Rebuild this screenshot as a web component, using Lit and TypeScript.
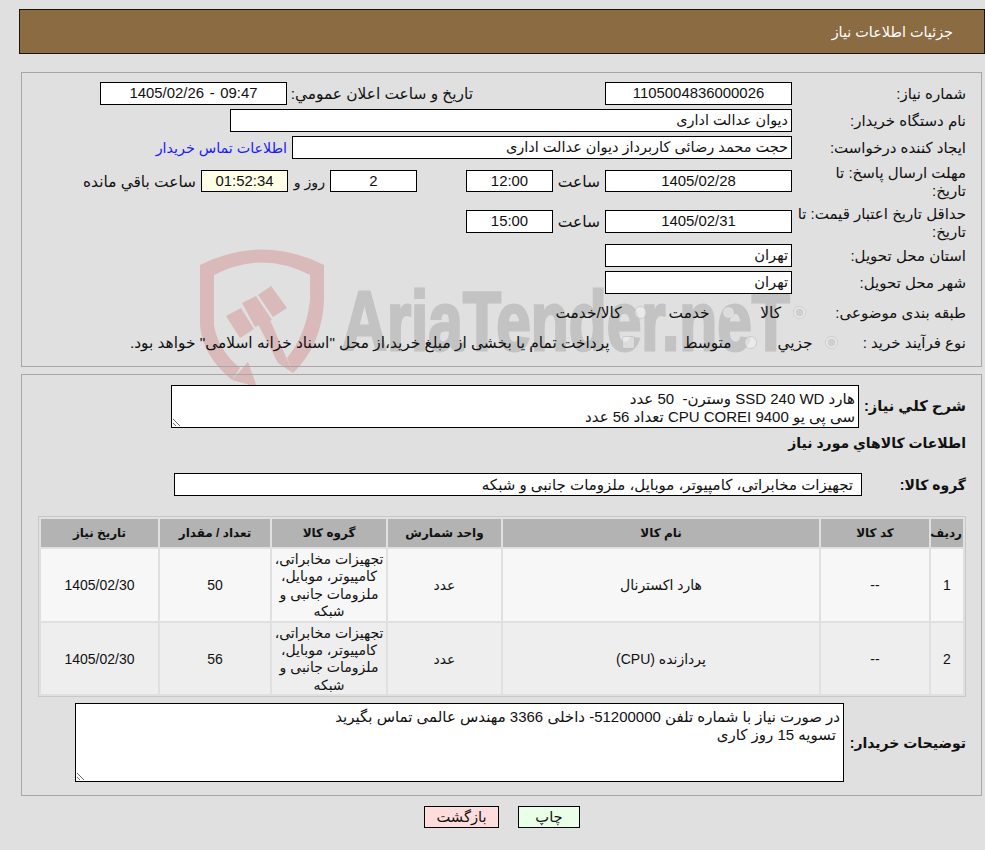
import { LitElement, html, css, svg } from "lit";
import { customElement } from "lit/decorators.js";

const GROUP = html`تجهیزات مخابراتی،<br />کامپیوتر، موبایل،<br />ملزومات جانبی و<br />شبکه`;

@customElement("app-root")
export class AppRoot extends LitElement {
  static styles = css`
    :host {
      display: block;
      position: relative;
      width: 985px;
      height: 850px;
      overflow: hidden;
      background: #e0e0e0;
      font-family: "Liberation Sans", "DejaVu Sans", sans-serif;
      font-size: 14.67px;
      line-height: 18px;
      color: #111;
      direction: rtl;
    }
    .wm { position: absolute; left: 0; top: 0; z-index: 0; direction: ltr; }
    .wm text { font-family: "Liberation Sans", sans-serif; font-weight: 700; }
    .page {
      position: relative;
      z-index: 1;
      display: flex;
      flex-direction: column;
      padding: 9px 0 0 19px;
    }
    .head {
      height: 43px;
      background: #8b6c42;
      border: 1px solid #1c1408;
      color: #fff;
      display: flex;
      align-items: center;
      padding-right: 31px;
      font-size: 14.4px;
    }
    .panel {
      margin: 0 3px 0 2px;
      border: 1px solid #a6a6a6;
      padding: 9px 15px 0 0;
    }
    .p1 { margin-top: 18px; height: 284px; }
    .p2 { margin-top: 7px; height: 411px; }
    .row { display: flex; align-items: flex-start; margin-bottom: 4px; }
    .lbl { width: 174px; flex: none; padding-top: 3px; font-size: 15px; }
    .row.tall { margin-bottom: 4px; padding-top: 1px; }
    .tall .lbl { padding-top: 0; }
    .box {
      box-sizing: border-box;
      height: 23px;
      flex: none;
      background: #fff;
      border: 1px solid #000;
      padding: 0 3px;
      line-height: 21px;
      white-space: nowrap;
    }
    .short { height: 22px; line-height: 20px; }
    .c { text-align: center; font-size: 14.9px; }
    .w187 { width: 187px; }
    .w87 { width: 87px; }
    .clock { background: #ffffe8; }
    .txt { padding: 3px 5px 0; white-space: nowrap; flex: none; font-size: 15.4px; }
    .sa { width: 42px; padding: 3px 5px 0 0; flex: none; font-size: 15.5px; }
    .announce { width: 318px; box-sizing: border-box; padding-right: 132px; }
    .gap5 { margin-right: 5px; }
    .gap9 { margin-right: 9px; }
    .ml49 { margin-right: 49px; }
    .day { width: 33px; box-sizing: border-box; padding-left: 0; font-size: 14.2px; }
    .mt6 { margin-top: 6px; }
    .mt5 { margin-top: 5px; }
    .wide1 { width: 562px; font-size: 14.4px; }
    .wide2 { width: 500px; font-size: 14.5px; }
    .tight { margin-bottom: 3px !important; }
    a { color: #1a1aff; text-decoration: none; font-size: 14.3px; }
    .radios { height: 26px; margin-bottom: 4px; align-items: center; }
    .radios .lbl { padding-top: 0; }
    .r8 { margin-top: 6px; }
    .r8 .lbl { width: 160px; }
    .r9 .lbl { width: 128.5px; }
    .opt { display: flex; align-items: center; white-space: nowrap; flex: none; }
    .opt input { margin: 0 0 2px; width: 13px; height: 13px; opacity: 0.75; flex: none; }
    .opt span { margin-right: 12px; font-size: 15.4px; }
    .o71 { width: 71.5px; }
    .o88 { width: 88px; }
    .o81 { width: 81px; }
    .o122 { width: 122px; }
    .sec { font-weight: 700; font-size: 14px; }
    .sec .lbl2 { flex: none; white-space: nowrap; }
    textarea {
      box-sizing: border-box;
      display: block;
      flex: none;
      border: 1px solid #000;
      border-radius: 0;
      background: #fff;
      font-family: inherit;
      font-size: 15px;
      font-weight: 400;
      line-height: 18px;
      color: #111;
      padding: 4px 3px 3px;
      margin: 0;
      outline: none;
      overflow: hidden;
    }
    .row-a { align-items: center; margin-bottom: 0; height: 44px; }
    .row-a .lbl2 { width: 107px; font-size: 14.7px; }
    .row-a textarea { width: 688px; height: 43px; }
    .title { margin-top: 6px; height: 18px; }
    .row-g { margin-top: 21px; align-items: center; margin-bottom: 0; }
    .row-g .lbl2 { width: 104px; }
    .row-g .box { width: 688px; padding-right: 8px; font-weight: 400; font-size: 15px; }
    table {
      box-sizing: border-box;
      table-layout: fixed;
      width: 928px;
      margin-top: 20px;
      border: 1px solid #c8c8c8;
      border-spacing: 2px;
      border-collapse: separate;
      text-align: center;
    }
    .k1 { width: 32px; }
    .k2 { width: 108px; }
    .k3 { width: 316px; }
    .k4 { width: 113px; }
    .k5 { width: 114px; }
    .k6 { width: 110px; }
    .k7 { width: 117px; }
    th { padding: 0 1px; background: #b3b3b3; height: 28px; font-size: 12px; font-weight: 700; }
    td { padding: 2px 1px 0; height: 69.5px; line-height: 17.4px; font-size: 14px; }
    tr.odd td { background: #f7f7f7; }
    tr.even td { background: #eeeeee; }
    .row-n { margin-top: 6px; align-items: center; margin-bottom: 0; }
    .row-n .lbl2 { width: 122px; }
    .row-n textarea { width: 769px; height: 79px; }
    .btns {
      display: flex;
      justify-content: center;
      gap: 19px;
      margin-top: 10px;
    }
    button {
      box-sizing: border-box;
      height: 22px;
      border: 1px solid #000;
      border-radius: 0;
      font: inherit;
      line-height: 18px;
      color: #111;
      padding: 0;
    }
    .print { width: 62px; background: #eaffe8; }
    .back { width: 75px; background: #ffdddd; }
    .ltr { direction: ltr; unicode-bidi: isolate; word-spacing: 1.5px; }
  `;

  private watermark() {
    return svg`
      <path fill="#d9b9b9" fill-rule="evenodd" d="M200 265 Q262 234 324 265 L324 300 Q322 345 293 373 L287 358 Q306 335 310 300 L310 275 Q262 250 214 275 L214 325 Q218 350 240 368 L232 380 Q202 355 200 325 Z"/>
      <path fill="#d9b9b9" d="M226 316 L241 308 L254 329 L240 338 Z M242 303 L256 296 L272 320 L255 327 Z M258 295 L271 286 L287 308 L273 317 Z M257 322 L270 320 L293 373 L278 363 Z M248 362 L232 380 L257 387 Z"/>
      <text transform="translate(342 350) scale(0.74 1)" font-size="84" fill="#c3c3c3" stroke="#c3c3c3" stroke-width="3">AriaTender.neT</text>
    `;
  }

  render() {
    return html`
      <svg class="wm" width="985" height="420" viewBox="0 0 985 420">${this.watermark()}</svg>
      <div class="page">
        <div class="head">جزئیات اطلاعات نیاز</div>

        <section class="panel p1">
          <div class="row">
            <div class="lbl">شماره نیاز:</div>
            <div class="box w187 c">1105004836000026</div>
            <div class="txt announce">تاريخ و ساعت اعلان عمومي:</div>
            <div class="box w187 c"><span class="ltr">1405/02/26 - 09:47</span></div>
          </div>
          <div class="row">
            <div class="lbl">نام دستگاه خریدار:</div>
            <div class="box wide1">دیوان عدالت اداری</div>
          </div>
          <div class="row">
            <div class="lbl">ایجاد کننده درخواست:</div>
            <div class="box wide2">حجت محمد رضائی کاربرداز دیوان عدالت اداری</div>
            <div class="txt"><a href="#">اطلاعات تماس خریدار</a></div>
          </div>
          <div class="row tall">
            <div class="lbl">مهلت ارسال پاسخ: تا<br />تاریخ:</div>
            <div class="box short w187 c mt6">1405/02/28</div>
            <div class="sa mt6">ساعت</div>
            <div class="box short w87 c mt6 gap5">12:00</div>
            <div class="box short w87 c mt6 ml49">2</div>
            <div class="txt mt6 day">روز و</div>
            <div class="box short w87 c clock mt6 gap9">01:52:34</div>
            <div class="txt mt6">ساعت باقي مانده</div>
          </div>
          <div class="row tall tight">
            <div class="lbl">حداقل تاریخ اعتبار قیمت: تا<br />تاریخ:</div>
            <div class="box w187 c mt5">1405/02/31</div>
            <div class="sa mt5">ساعت</div>
            <div class="box w87 c mt5 gap5">15:00</div>
          </div>
          <div class="row">
            <div class="lbl">استان محل تحویل:</div>
            <div class="box w187">تهران</div>
          </div>
          <div class="row">
            <div class="lbl">شهر محل تحویل:</div>
            <div class="box w187">تهران</div>
          </div>
          <div class="row radios r8">
            <div class="lbl">طبقه بندی موضوعی:</div>
            <label class="opt o71"><input type="radio" disabled checked /><span>کالا</span></label>
            <label class="opt o88"><input type="radio" disabled /><span>خدمت</span></label>
            <label class="opt"><input type="radio" disabled /><span>کالا/خدمت</span></label>
          </div>
          <div class="row radios r9">
            <div class="lbl">نوع فرآیند خرید :</div>
            <label class="opt o81"><input type="radio" disabled checked /><span>جزيي</span></label>
            <label class="opt o122"><input type="radio" disabled /><span>متوسط</span></label>
            <label class="opt"><input type="checkbox" disabled /><span>پرداخت تمام یا بخشی از مبلغ خرید،از محل "اسناد خزانه اسلامی" خواهد بود.</span></label>
          </div>
        </section>

        <section class="panel p2">
          <div class="row row-a sec">
            <div class="lbl2">شرح كلي نياز:</div>
            <textarea dir="rtl" readonly>هارد SSD 240 WD وسترن-  50 عدد
سی پی یو CPU COREI 9400 تعداد 56 عدد</textarea>
          </div>
          <div class="sec title">اطلاعات كالاهاي مورد نياز</div>
          <div class="row row-g sec">
            <div class="lbl2">گروه کالا:</div>
            <div class="box">تجهیزات مخابراتی، کامپیوتر، موبایل، ملزومات جانبی و شبکه</div>
          </div>
          <table>
            <colgroup>
              <col class="k1" /><col class="k2" /><col class="k3" /><col class="k4" />
              <col class="k5" /><col class="k6" /><col class="k7" />
            </colgroup>
            <thead>
              <tr><th>ردیف</th><th>کد کالا</th><th>نام کالا</th><th>واحد شمارش</th><th>گروه کالا</th><th>تعداد / مقدار</th><th>تاریخ نیاز</th></tr>
            </thead>
            <tbody>
              <tr class="odd"><td>1</td><td>--</td><td>هارد اکسترنال</td><td>عدد</td><td>${GROUP}</td><td>50</td><td>1405/02/30</td></tr>
              <tr class="even"><td>2</td><td>--</td><td>پردازنده (CPU)</td><td>عدد</td><td>${GROUP}</td><td>56</td><td>1405/02/30</td></tr>
            </tbody>
          </table>
          <div class="row row-n sec">
            <div class="lbl2">توضیحات خریدار:</div>
            <textarea dir="rtl" readonly>در صورت نیاز با شماره تلفن 51200000- داخلی 3366 مهندس عالمی تماس بگیرید
 تسویه 15 روز کاری</textarea>
          </div>
        </section>

        <div class="btns">
          <button class="print">چاپ</button>
          <button class="back">بازگشت</button>
        </div>
      </div>
    `;
  }
}
